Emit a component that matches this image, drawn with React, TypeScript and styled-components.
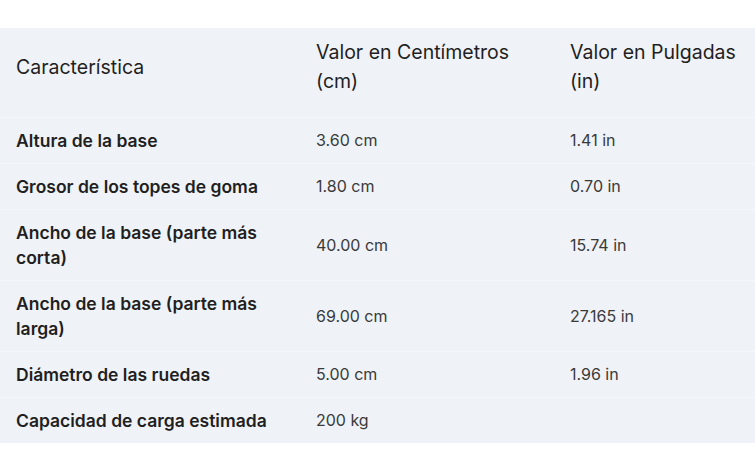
import React from 'react';
import styled, { createGlobalStyle } from 'styled-components';

const GlobalStyle = createGlobalStyle`
  body {
    margin: 0;
    background: #ffffff;
    font-family: Inter, 'Noto Sans', sans-serif;
    color: #1f1f1f;
  }
`;

const Page = styled.div`
  padding-top: 28px;
`;

const Table = styled.table`
  width: 755px;
  border-collapse: collapse;
  table-layout: fixed;
  background: #eff2f7;
`;

const HeadCell = styled.th`
  text-align: left;
  font-weight: 400;
  font-size: 19.5px;
  line-height: 29px;
  padding: 10px 6px 21px 16px;
  vertical-align: middle;
`;

const Row = styled.tr`
  border-top: 1px solid #f5f7fa;
`;

const Cell = styled.td<{ $bold?: boolean }>`
  font-size: ${(p) => (p.$bold ? '17.5px' : '16px')};
  line-height: 25px;
  font-weight: ${(p) => (p.$bold ? 600 : 400)};
  padding: 10px 16px;
  vertical-align: middle;
  color: ${(p) => (p.$bold ? '#1f1f1f' : '#3a3a3a')};
`;

const rows = [
  ['Altura de la base', '3.60 cm', '1.41 in'],
  ['Grosor de los topes de goma', '1.80 cm', '0.70 in'],
  ['Ancho de la base (parte más corta)', '40.00 cm', '15.74 in'],
  ['Ancho de la base (parte más larga)', '69.00 cm', '27.165 in'],
  ['Diámetro de las ruedas', '5.00 cm', '1.96 in'],
  ['Capacidad de carga estimada', '200 kg', ''],
];

const App: React.FC = () => {
  return (
    <>
      <GlobalStyle />
      <Page>
        <Table>
          <colgroup>
            <col style={{ width: 300 }} />
            <col style={{ width: 254 }} />
            <col style={{ width: 201 }} />
          </colgroup>
          <thead>
            <tr>
              <HeadCell>Característica</HeadCell>
              <HeadCell>Valor en Centímetros (cm)</HeadCell>
              <HeadCell>Valor en Pulgadas (in)</HeadCell>
            </tr>
          </thead>
          <tbody>
            {rows.map((r) => (
              <Row key={r[0]}>
                <Cell $bold>{r[0]}</Cell>
                <Cell>{r[1]}</Cell>
                <Cell>{r[2]}</Cell>
              </Row>
            ))}
          </tbody>
        </Table>
      </Page>
    </>
  );
};

export default App;
